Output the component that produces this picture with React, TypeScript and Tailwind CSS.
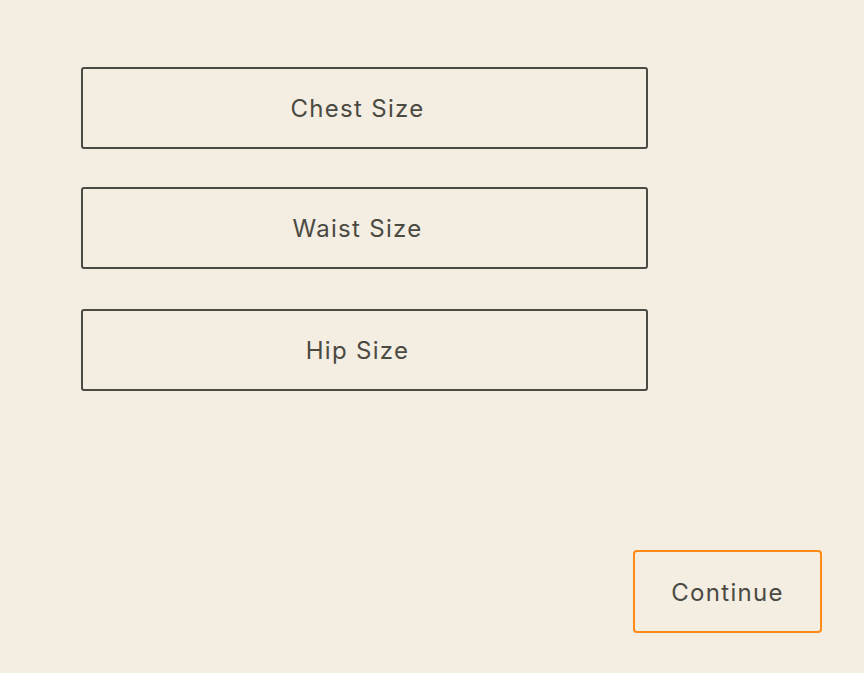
import React from "react";

export default function App() {
  const items = [
    { t: "Chest Size", m: "" },
    { t: "Waist Size", m: "mt-[38px]" },
    { t: "Hip Size", m: "mt-[40px]" },
  ];
  return (
    <div
      className="w-full h-[673px] bg-[#f3ede2] flex flex-col pt-[67px] pl-[81px] pr-[42px] pb-[40px] text-[#4b4a42]"
      style={{ fontFamily: "Inter, 'Liberation Sans', sans-serif" }}
    >
      <div className="flex flex-col">
        {items.map(({ t, m }) => (
          <button
            key={t}
            className={`${m} w-[567px] h-[82px] border-2 border-[#4b4a42] rounded-[3px] flex items-center justify-center pr-[14px] pt-[2px] text-[24px] tracking-[1.3px] text-[#4b4a42]`}
          >
            {t}
          </button>
        ))}
      </div>
      <div className="mt-auto flex justify-end">
        <button className="w-[189px] h-[83px] border-2 border-[#ff8a15] rounded-[4px] flex items-center justify-center pt-[2px] text-[24px] tracking-[1.3px] text-[#4b4a42]">
          Continue
        </button>
      </div>
    </div>
  );
}
